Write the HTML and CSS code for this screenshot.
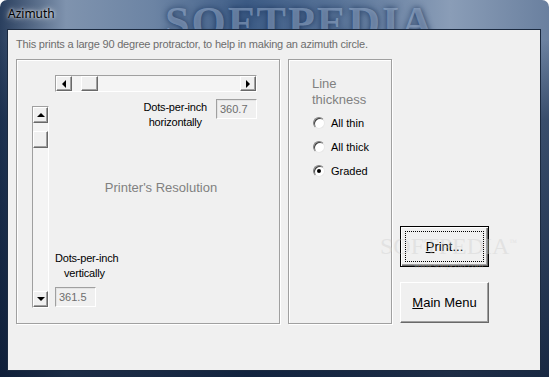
FILE: index.html
```html
<!DOCTYPE html>
<html lang="en">
<head>
  <meta charset="UTF-8">
  <title>Azimuth</title>
  <link rel="stylesheet" href="styles.css">
</head>
<body>

<div class="window">
  <!-- Glass frame / caption -->
  <div class="titlebar">
    <span class="brand">SOFTPEDIA</span>
    <span class="caption">Azimuth</span>
  </div>

  <div class="client">
    <p class="intro">This prints a large 90 degree protractor, to help in making an azimuth circle.</p>

    <div class="panels">
      <!-- Printer resolution -->
      <div class="group res">
        <div class="hscroll">
          <span class="sbtn"><i class="arrow left"></i></span>
          <span class="track"><span class="thumb h-thumb"></span></span>
          <span class="sbtn"><i class="arrow right"></i></span>
        </div>
        <div class="vscroll">
          <span class="sbtn"><i class="arrow up"></i></span>
          <span class="track"><span class="thumb v-thumb"></span></span>
          <span class="sbtn"><i class="arrow down"></i></span>
        </div>
        <div class="dpi-h">
          <div class="label">Dots-per-inch<br>horizontally</div>
          <div class="field">360.7</div>
        </div>
        <div class="res-title">Printer's Resolution</div>
        <div class="dpi-v">
          <div class="label">Dots-per-inch<br><span class="indent">vertically</span></div>
          <div class="field">361.5</div>
        </div>
      </div>

      <!-- Line thickness -->
      <div class="group thick">
        <div class="legend">Line<br>thickness</div>
        <div class="radio"><span class="dot"></span>All thin</div>
        <div class="radio"><span class="dot"></span>All thick</div>
        <div class="radio"><span class="dot on"></span>Graded</div>
      </div>

      <div class="actions">
        <button class="btn default"><span class="focus"><u>P</u>rint...</span></button>
        <button class="btn"><u>M</u>ain Menu</button>
      </div>
    </div>

    <div class="watermark">
      <span class="wm-big">SOFTPEDIA<sup>™</sup></span>
      <span class="wm-small">www.softpedia.com</span>
    </div>
  </div>
</div>

</body>
</html>
```

FILE: styles.css
```css
body {
  margin: 0;
  background: #fff;
  font-family: 'Liberation Sans', Arial, sans-serif;
  font-size: 11px;
}
.window {
  position: relative;
  width: 549px;
  height: 377px;
  box-sizing: border-box;
  border-radius: 7px 7px 0 0;
  overflow: hidden;
  background:
    linear-gradient(180deg, rgba(0,0,0,0) 0, rgba(0,0,0,0) 40px, rgba(15,35,65,0.55) 120px, rgba(10,25,50,0.85) 100%),
    linear-gradient(90deg, #2a3f5e 0, #7f93ae 12%, #6c84a4 28%, #3d5c86 45%, #5a7599 62%, #8a9db7 82%, #6a809f 100%);
}
.titlebar {
  position: relative;
  height: 29px;
  padding-left: 8px;
}
.caption {
  position: relative;
  line-height: 28px;
  font-family: 'Noto Sans', 'Open Sans', sans-serif;
  font-size: 12px;
  color: #000;
  text-shadow: 0 0 6px rgba(255,255,255,0.9), 0 0 3px rgba(255,255,255,0.8);
}
.brand {
  position: absolute;
  left: 165px;
  top: 3px;
  font-family: 'Liberation Serif', serif;
  font-weight: bold;
  font-size: 44px;
  letter-spacing: 2px;
  color: rgba(180,200,228,0.45);
  text-shadow: 0 0 6px rgba(20,45,85,0.9);
  line-height: 40px;
}
.client {
  position: relative;
  margin: 0 8px 0 7px;
  height: 342px;
  box-sizing: border-box;
  border: 1px solid #1b2a40;
  background: #f0f0f0;
  padding: 7px 8px 0 8px;
}
.intro {
  margin: 0;
  line-height: 15px;
  letter-spacing: -0.2px;
  color: #6d6d6d;
}
.panels {
  display: flex;
  gap: 8px;
  margin-top: 7px;
  height: 265px;
}
.group {
  box-sizing: border-box;
  height: 265px;
  border: 1px solid #a0a0a0;
  box-shadow: inset 1px 1px 0 #fff, 1px 1px 0 #fff;
}
.res {
  width: 264px;
  display: grid;
  grid-template-columns: 17px 202px;
  grid-template-rows: 17px 31px 107px 57px;
  column-gap: 6px;
  row-gap: 7px;
  padding: 15px 0 0 15px;
}

/* scroll bars */
.hscroll, .vscroll {
  display: flex;
  box-sizing: border-box;
  background: #f4f4f4;
  border: 1px solid;
  border-color: #a0a0a0 #fff #fff #a0a0a0;
}
.hscroll {
  grid-column: 2;
  grid-row: 1;
}
.vscroll {
  grid-column: 1;
  grid-row: 2 / span 3;
  flex-direction: column;
  margin-top: 7px;
}
.sbtn, .thumb {
  display: flex;
  align-items: center;
  justify-content: center;
  box-sizing: border-box;
  width: 16px;
  height: 16px;
  background: #f0f0f0;
  border: 1px solid;
  border-color: #fff #696969 #696969 #fff;
  box-shadow: inset -1px -1px 0 #a0a0a0;
  flex: none;
}
.hscroll .sbtn { height: 15px; }
.vscroll .sbtn { width: 15px; }
.track {
  flex: 1;
  display: flex;
}
.h-thumb {
  margin-left: 9px;
  height: 15px;
  width: 17px;
}
.v-thumb {
  margin-top: 8px;
  width: 15px;
  height: 17px;
}
.arrow {
  width: 0;
  height: 0;
  border: 4px solid transparent;
}
.arrow.left { border-right-color: #000; border-left-width: 0; margin-left: -1px; }
.arrow.right { border-left-color: #000; border-right-width: 0; }
.arrow.up { border-bottom-color: #000; border-top-width: 0; }
.arrow.down { border-top-color: #000; border-bottom-width: 0; }

/* resolution fields */
.dpi-h {
  grid-column: 2;
  grid-row: 2;
  display: flex;
  justify-content: flex-end;
  gap: 9px;
}
.label {
  line-height: 15px;
  letter-spacing: -0.2px;
  color: #000;
  text-align: center;
}
.dpi-h .label { padding-top: 1px; }
.field {
  box-sizing: border-box;
  width: 41px;
  height: 20px;
  padding: 2px 3px;
  line-height: 15px;
  color: #6d6d6d;
  border: 1px solid;
  border-color: #a0a0a0 #fff #fff #a0a0a0;
  box-shadow: inset 1px 1px 0 #e3e3e3;
}
.res-title {
  grid-column: 2;
  grid-row: 3;
  align-self: center;
  padding: 0 0 6px 10px;
  text-align: center;
  font-size: 13px;
  color: #808080;
}
.dpi-v {
  grid-column: 2;
  grid-row: 4;
  display: flex;
  flex-direction: column;
  align-items: flex-start;
}
.dpi-v .label {
  text-align: left;
  height: 36px;
}
.indent {
  padding-left: 9px;
}

/* line thickness */
.thick {
  width: 104px;
  padding: 16px 0 0 23px;
}
.legend {
  font-size: 13px;
  line-height: 16px;
  color: #808080;
  margin-bottom: 3px;
}
.radio {
  display: flex;
  align-items: center;
  height: 24px;
  color: #000;
}
.dot {
  position: relative;
  box-sizing: border-box;
  width: 12px;
  height: 12px;
  margin: 0 6px 0 1px;
  border-radius: 50%;
  background: #fff;
  border: 1px solid;
  border-color: #808080 #e8e8e8 #e8e8e8 #808080;
  box-shadow: inset 1px 1px 0 #404040;
}
.dot.on::after {
  content: "";
  position: absolute;
  left: 3px;
  top: 3px;
  width: 4px;
  height: 4px;
  border-radius: 50%;
  background: #000;
}

/* buttons */
.actions {
  width: 89px;
  display: flex;
  flex-direction: column;
  justify-content: flex-end;
  gap: 15px;
  padding-bottom: 1px;
}
.btn {
  box-sizing: border-box;
  width: 89px;
  height: 41px;
  margin: 0;
  padding: 0;
  font: inherit;
  font-size: 13px;
  color: #000;
  background: #f0f0f0;
  border: 1px solid;
  border-color: #fff #696969 #696969 #fff;
  box-shadow: inset -1px -1px 0 #a0a0a0;
}
.btn.default {
  border: 1px solid #000;
  box-shadow: inset 1px 1px 0 #fff, inset -1px -1px 0 #696969, inset -2px -2px 0 #a0a0a0;
  padding: 4px;
}
.focus {
  display: flex;
  align-items: center;
  justify-content: center;
  height: 100%;
  border: 1px dotted #000;
  box-sizing: border-box;
}

/* watermark over the dialog */
.watermark {
  position: absolute;
  left: 372px;
  top: 198px;
  display: flex;
  flex-direction: column;
  align-items: center;
  pointer-events: none;
}
.wm-big {
  font-family: 'Liberation Serif', serif;
  font-size: 24px;
  color: rgba(205,205,205,0.4);
  line-height: 30px;
}
.wm-big sup {
  font-size: 8px;
}
.wm-small {
  margin-top: 0;
  font-size: 8px;
  color: rgba(190,190,190,0.45);
}
```
